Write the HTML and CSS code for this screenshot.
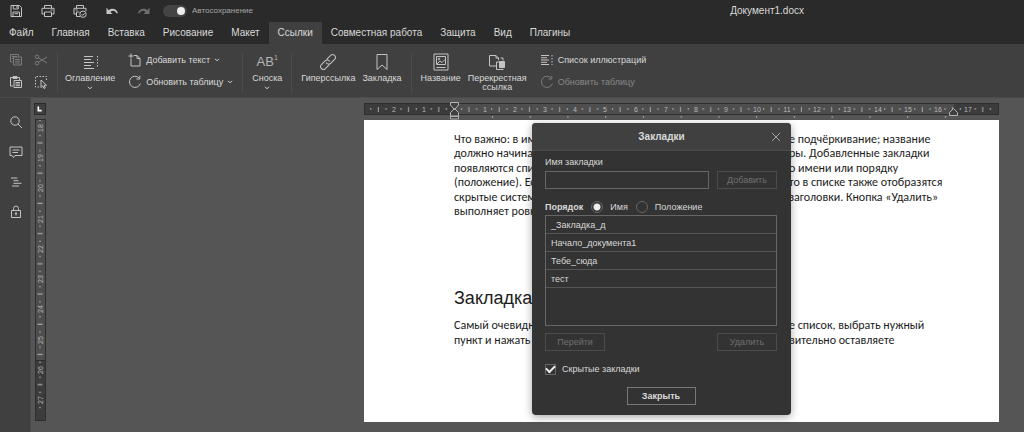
FILE: index.html
```html
<!DOCTYPE html>
<html lang="ru">
<head>
<meta charset="utf-8">
<title>Документ1.docx</title>
<link rel="stylesheet" href="styles.css">
</head>
<body>
<svg class="defs" width="0" height="0" aria-hidden="true">
  <symbol id="chevron" viewBox="0 0 6 4"><path d="M1 .8l2 2 2-2"/></symbol>
  <symbol id="refresh" viewBox="0 0 14 14"><path d="M11.3 3.2A5.6 5.6 0 1 0 12.4 8.500M11.800 .8v3.200H8.400"/></symbol>
</svg>

<header class="titlebar">
  <nav class="quick" aria-label="Быстрый доступ">
    <button class="icon-btn" aria-label="Сохранить"><svg viewBox="0 0 14 14"><path d="M2 1.500h8.500l2 2v9h-10.500zM4.300 1.500v3.500h5v-3.500M4 12.500V8h6.500v4.500M5.500 9.700h3.500M8 2v2"/></svg></button>
    <button class="icon-btn" aria-label="Печать"><svg viewBox="0 0 14 14"><path d="M3.500 4V1.500h7V4M3.500 10H1V4.300h12V10h-2.500M3.500 8h7v4.500h-7zM9.500 6h2"/></svg></button>
    <button class="icon-btn" aria-label="Быстрая печать"><svg viewBox="0 0 14 14"><path d="M3.500 4V1.500h7V4M3.500 10H1V4.300h12V7M6.500 8h-3v4.500h3.500M2.500 6h2"/><circle cx="10" cy="10.200" r="3.200"/><path d="M8.500 10.200l1.200 1.200 2-2.200"/></svg></button>
    <button class="icon-btn solid" aria-label="Отменить"><svg viewBox="0 0 14 14"><path d="M1.500 3.500v6.500h6L5.400 8c2-2 4.800-1.400 6.300 1.500L13 9C11.500 4.500 7 3.500 3.700 6.200z"/></svg></button>
    <button class="icon-btn solid dim" aria-label="Повторить"><svg viewBox="0 0 14 14"><path d="M12.500 3.500v6.500h-6L8.600 8c-2-2-4.800-1.400-6.300 1.500L1 9C2.500 4.500 7 3.500 10.300 6.200z"/></svg></button>
  </nav>
  <label class="autosave"><input type="checkbox" class="switch" checked><span>Автосохранение</span></label>
  <h1 class="doc-name">Документ1.docx</h1>
</header>

<nav class="tabs" aria-label="Вкладки">
  <button class="tab">Файл</button>
  <button class="tab">Главная</button>
  <button class="tab">Вставка</button>
  <button class="tab">Рисование</button>
  <button class="tab">Макет</button>
  <button class="tab active">Ссылки</button>
  <button class="tab">Совместная работа</button>
  <button class="tab">Защита</button>
  <button class="tab">Вид</button>
  <button class="tab">Плагины</button>
</nav>

<section class="toolbar" aria-label="Ссылки">
  <div class="group clipboard">
    <button class="icon-btn dim" aria-label="Копировать"><svg viewBox="0 0 14 14"><path d="M3.500 9H1.500V1.500h8v2M4.500 4h8v8h-8zM6 6.500h5M6 8.200h5M6 10h5M3 3.500h5M3 5.500h1"/></svg></button>
    <button class="icon-btn dim" aria-label="Вырезать"><svg viewBox="0 0 14 14"><circle cx="3" cy="3.800" r="1.800"/><circle cx="3" cy="10.200" r="1.800"/><path d="M4.500 4.800L13 10M4.500 9.200L13 4"/></svg></button>
    <button class="icon-btn" aria-label="Вставить"><svg viewBox="0 0 14 14"><path d="M4 11H1.500V2.500h9V5M4 1.500h4v2H4zM5 5.500h7.500v7H5zM6.500 7.500h4.500M6.500 9h4.500M6.500 10.700h4.500"/></svg></button>
    <button class="icon-btn" aria-label="Выделить"><svg viewBox="0 0 14 14"><path stroke-dasharray="1.500 1.500" d="M5 12H1.500V1.500h11V6"/><path fill="#404040" d="M7 5l5.500 5.200-2.500.2 1.300 2.500-1.300.6-1.200-2.600L7 12.600z"/></svg></button>
  </div>
  <div class="group contents">
    <button class="big"><svg class="big-icon" viewBox="0 0 18 18"><path d="M3 3.500h9M3 6.500h7M3 9.500h10M3 12.500h7M3 15.500h10"/><path stroke-dasharray="1.500 1.500" d="M16.500 3v12"/></svg><span>Оглавление</span><svg class="chev"><use href="#chevron"/></svg></button>
    <div class="stack">
      <button class="row-btn"><svg class="row-icon" viewBox="0 0 14 14"><path d="M6 2.500h3l3 3v7.500H3V6M9 2.500v3h3M3 .5v5M.5 3h5"/></svg><span>Добавить текст</span><svg class="chev"><use href="#chevron"/></svg></button>
      <button class="row-btn"><svg class="row-icon"><use href="#refresh"/></svg><span>Обновить таблицу</span><svg class="chev"><use href="#chevron"/></svg></button>
    </div>
  </div>
  <div class="group">
    <button class="big"><span class="ab">AB<sup>1</sup></span><span>Сноска</span><svg class="chev"><use href="#chevron"/></svg></button>
  </div>
  <div class="group links">
    <button class="big"><svg class="big-icon" viewBox="0 0 18 18"><g transform="rotate(-45 9 9)"><path d="M8 11.800H2.500a2.800 2.800 0 0 1 0-5.600H8a2.800 2.800 0 0 1 2.600 3.800M10 6.200h5.500a2.800 2.800 0 0 1 0 5.600H10a2.800 2.800 0 0 1-2.600-3.800"/></g></svg><span>Гиперссылка</span></button>
    <button class="big"><svg class="big-icon" viewBox="0 0 18 18"><path d="M4 1.500h10v15l-5-4.500-5 4.500z"/></svg><span>Закладка</span></button>
  </div>
  <div class="group captions">
    <button class="big"><svg class="big-icon" viewBox="0 0 18 18"><path d="M2 1h14v16H2zM4.500 3.500h9v8h-9zM5 11l3-3 2 1.500 3-3M4.500 14.500h9"/><circle cx="7" cy="6" r=".8"/></svg><span>Название</span></button>
    <button class="big"><svg class="big-icon" viewBox="0 0 18 18"><path d="M8 13H1.500V2.500H8l2.500 2.500V7M8 2.500V5h2.500M12.500 5H15v2.500M15.500 16.500H8.500V9H11"/><path fill="currentColor" d="M11.500 8.500h5v6h-5z"/></svg><span>Перекрестная<br>ссылка</span></button>
    <div class="stack">
      <button class="row-btn"><svg class="row-icon" viewBox="0 0 14 14"><path d="M1 2.500h8M1 4.800h6M1 7h8M1 9.300h6M1 11.500h8"/><path stroke-dasharray="1.500 1.500" d="M12 2v10"/></svg><span>Список иллюстраций</span></button>
      <button class="row-btn dim" disabled><svg class="row-icon"><use href="#refresh"/></svg><span>Обновить таблицу</span></button>
    </div>
  </div>
</section>

<main class="workspace">
  <aside class="sidebar">
    <button class="icon-btn" aria-label="Поиск"><svg viewBox="0 0 14 14"><circle cx="6" cy="6" r="4.200"/><path d="M9 9l4 4"/></svg></button>
    <button class="icon-btn" aria-label="Комментарии"><svg viewBox="0 0 14 14"><path d="M1 2h12v8.500H6l-1.500 2-1.500-2H1zM3.500 5h7M3.500 7.500h5.500"/></svg></button>
    <button class="icon-btn" aria-label="Заголовки"><svg viewBox="0 0 14 14"><path d="M2 3h6.500M4.500 5.700h5M4.500 8.300h8M3 11h7"/></svg></button>
    <button class="icon-btn" aria-label="Защита"><svg viewBox="0 0 14 14"><path d="M2.500 5.500h9v7h-9zM4.500 5.500v-2a2.500 2.500 0 0 1 5 0v2M7 8v2.500"/><circle cx="7" cy="8.300" r=".7"/></svg></button>
  </aside>

  <div class="vertical">
    <button class="tab-stop" aria-label="Позиция табуляции"><svg viewBox="0 0 12 12"><path d="M4 3v5h4"/></svg></button>
    <svg class="v-ruler" viewBox="0 0 12 302" aria-hidden="true">
      <defs><pattern id="v-ticks" width="12" height="30.220" y="9" patternUnits="userSpaceOnUse"><path d="M5 7.500h2M3.500 15h5M5 22.700h2"/></pattern></defs>
      <rect class="ruler-main" x="1" y="0" width="10" height="302"/>
      <rect class="ruler-margin" x="1" y="241" width="10" height="61"/>
      <rect class="ticks" fill="url(#v-ticks)" width="12" height="290"/>
      <rect class="ruler-frame" x="1.500" y=".5" width="10" height="301"/>
      <path class="ruler-frame" d="M1 241.500h11"/>
      <g class="digits" transform="rotate(-90)">
        <text x="-9" y="9">18</text><text x="-39" y="9">19</text><text x="-69" y="9">20</text><text x="-100" y="9">21</text><text x="-130" y="9">22</text><text x="-160" y="9">23</text><text x="-190" y="9">24</text><text x="-221" y="9">25</text><text x="-251" y="9">26</text><text x="-281" y="9">27</text>
      </g>
    </svg>
  </div>

  <div class="document">
    <svg class="h-ruler" viewBox="0 0 635 22" aria-hidden="true">
      <defs>
        <pattern id="h-ticks" width="30.220" height="12" x="90" y="6" patternUnits="userSpaceOnUse"><path d="M7.500 4v2M15 3v5M22.700 4v2"/></pattern>
        <pattern id="tabs-marks" width="37.750" height="3" x="109" y="18" patternUnits="userSpaceOnUse"><path d="M19.500 0v2"/></pattern>
      </defs>
      <rect class="ruler-main" y="6" width="635" height="11"/>
      <rect class="ruler-margin" y="6" width="90" height="11"/>
      <rect class="ruler-margin" x="590" y="6" width="45" height="11"/>
      <rect class="ticks" fill="url(#h-ticks)" x="4" y="6" width="625" height="11"/>
      <rect class="ticks" fill="url(#tabs-marks)" x="100" y="18" width="500" height="3"/>
      <rect class="ruler-frame" x=".5" y="5.500" width="634" height="11"/>
      <g class="digits">
        <text x="30" y="14">2</text><text x="60" y="14">1</text><text x="121" y="14">1</text><text x="151" y="14">2</text><text x="181" y="14">3</text><text x="211" y="14">4</text><text x="241" y="14">5</text><text x="272" y="14">6</text><text x="302" y="14">7</text><text x="332" y="14">8</text><text x="362" y="14">9</text><text x="393" y="14">10</text><text x="423" y="14">11</text><text x="453" y="14">12</text><text x="483" y="14">13</text><text x="514" y="14">14</text><text x="544" y="14">15</text><text x="574" y="14">16</text><text x="604" y="14">17</text>
      </g>
      <path class="marker" d="M86.500 4.500h8v2.500l-3.500 4h-1l-3.500-4zM86.500 18v-3.500l3.500-3.500h1l3.500 3.500V18zM86.500 18.500h8v2.500h-8zM585.500 17.500v-3l4-4 4 4v3z"/>
    </svg>
    <article class="page">
      <div class="para">
        <p>Что важно: в им<br>должно начина<br>появляются спи<br>(положение). Ес<br>скрытые систем<br>выполняет ровн</p>
        <p>е подчёркивание; название<br>ры. Добавленные закладки<br>о имени или порядку<br>то в списке также отобразятся<br>заголовки. Кнопка «Удалить»</p>
      </div>
      <h2>Закладка</h2>
      <div class="para">
        <p>Самый очевидн<br>пункт и нажать</p>
        <p>е список, выбрать нужный<br>вительно оставляете</p>
      </div>
    </article>
  </div>

  <form class="dialog" role="dialog" aria-labelledby="dialog-title">
    <div class="dialog-head">
      <h2 id="dialog-title">Закладки</h2>
      <button type="button" class="close" aria-label="Закрыть окно"><svg viewBox="0 0 10 10"><path d="M1 1l8 8M9 1L1 9"/></svg></button>
    </div>
    <div class="dialog-body">
      <label for="bm-name">Имя закладки</label>
      <div class="name-row">
        <input id="bm-name" type="text">
        <button type="button" class="btn" disabled>Добавить</button>
      </div>
      <div class="order" role="radiogroup" aria-labelledby="order-label">
        <strong id="order-label">Порядок</strong>
        <label><input type="radio" name="order" checked>Имя</label>
        <label><input type="radio" name="order">Положение</label>
      </div>
      <ul class="list">
        <li>_Закладка_д</li>
        <li>Начало_документа1</li>
        <li>Тебе_сюда</li>
        <li>тест</li>
      </ul>
      <div class="actions">
        <button type="button" class="btn" disabled>Перейти</button>
        <button type="button" class="btn" disabled>Удалить</button>
      </div>
      <label class="hidden-marks"><input type="checkbox" checked>Скрытые закладки</label>
      <button type="button" class="btn primary">Закрыть</button>
    </div>
  </form>
</main>
</body>
</html>
```
FILE: styles.css
```css
* { box-sizing: border-box; }
body {
  margin: 0;
  min-height: 100vh;
  display: flex;
  flex-direction: column;
  overflow: hidden;
  background: #555;
  color: #d9d9d9;
  font: 9px/12px "Liberation Sans", Arial, sans-serif;
}
button, input { font: inherit; color: inherit; margin: 0; }
button { padding: 0; border: 0; background: none; }
h1, h2, p, ul { margin: 0; padding: 0; font-weight: normal; }
svg { fill: none; stroke: currentColor; stroke-width: 1; display: block; }
.defs { position: absolute; }
.dim { opacity: .45; }
.icon-btn, .icon-btn svg { width: 14px; height: 14px; flex: none; }
.icon-btn, .big-icon, .row-icon { color: #c4c4c4; }
.icon-btn.solid svg { fill: currentColor; stroke: none; }

.titlebar { display: flex; align-items: center; height: 22px; padding-left: 9px; background: #2a2a2a; }
.quick { display: flex; gap: 18px; }
.autosave { display: flex; align-items: center; gap: 5px; margin-left: 12px; flex: 1; color: #a6a6a6; font-size: 8px; }
.switch { appearance: none; width: 24px; height: 12px; border-radius: 6px; background: #444; padding: 2px; display: flex; justify-content: flex-end; }
.switch::before { content: ""; width: 8px; height: 8px; border-radius: 50%; background: #eee; }
.doc-name { font-size: 10px; margin-right: 220px; }

.tabs { display: flex; height: 22px; background: #2a2a2a; font-size: 10px; }
.tab { padding: 0 9px; }
.tab.active { background: #404040; }

.toolbar { display: flex; height: 53px; padding: 9px 0 5px; background: #404040; }
.group { display: flex; padding: 0 9px; border-right: 1px solid #4c4c4c; }
.group:last-child { border: 0; }
.clipboard { display: grid; grid-template-columns: 14px 14px; column-gap: 11px; row-gap: 8px; align-content: start; }
.contents { gap: 13px; padding-left: 7px; }
.links, .captions { gap: 7px; }
.big { display: flex; flex-direction: column; align-items: center; line-height: 9px; }
.big-icon { width: 18px; height: 18px; margin-bottom: 3px; }
.ab { font-size: 13px; height: 18px; line-height: 18px; margin-bottom: 3px; display: flex; color: #b5b5b5; }
.ab sup { font-size: 7px; line-height: 9px; }
.chev { width: 6px; height: 4px; }
.big .chev { margin-top: 3px; }
.stack { display: flex; flex-direction: column; gap: 8px; }
.captions .stack { margin-left: 6px; }
.row-btn { display: flex; align-items: center; gap: 4px; height: 14px; }
.row-icon { width: 14px; height: 14px; }

.workspace { position: relative; display: flex; flex: 1; border-top: 1px solid #4c4c4c; }
.sidebar { display: flex; flex-direction: column; gap: 16px; width: 31px; padding: 17px 9px; background: #404040; border-right: 1px solid #4a4a4a; }
.vertical { width: 15px; padding-top: 5px; display: flex; flex-direction: column; align-items: flex-end; gap: 4px; }
.tab-stop { width: 12px; height: 12px; border: 1px solid #2b2b2b; background: #404040; color: #fff; }
.tab-stop svg { width: 10px; height: 10px; stroke-width: 2; }
.v-ruler { width: 12px; height: 302px; color: #a8a8a8; }
.h-ruler { width: 635px; height: 22px; color: #a8a8a8; }
.ticks { stroke: none; }
.ruler-main { fill: #4e4e4e; stroke: none; }
.ruler-margin { fill: #3c3c3c; stroke: none; }
.ruler-frame { stroke: #2e2e2e; }
.digits { fill: #b8b8b8; stroke: none; font-size: 7px; text-anchor: middle; }
.marker { fill: #404040; stroke: #b5b5b5; }

.document { flex: 1; display: flex; flex-direction: column; padding: 0 25px 10px 318px; }
.page {
  flex: 1;
  padding: 12px 0 0 90px;
  background: #fff;
  color: #1c1c1c;
  font: 12px/1.2 Carlito, Lato, "Noto Sans", sans-serif;
}
.page h2 { margin: 69px 0 9px; font: 18px/22px "Liberation Sans", Arial, sans-serif; }
.para { display: grid; grid-template-columns: 335px 1fr; white-space: nowrap; }

.dialog {
  position: absolute;
  left: 532px;
  top: 25px;
  width: 259px;
  border-radius: 4px;
  background: #333;
  box-shadow: 0 2px 8px rgba(0, 0, 0, .35);
  overflow: hidden;
}
.dialog-head { display: flex; align-items: center; height: 28px; padding: 0 10px; background: #404040; border-bottom: 1px solid #4c4c4c; }
.dialog-head h2 { flex: 1; padding-left: 10px; text-align: center; font-size: 10px; font-weight: bold; }
.close svg { width: 10px; height: 10px; color: #a8a8a8; }
.dialog-body { display: flex; flex-direction: column; padding: 5px 14px 10px 13px; }
.name-row { display: flex; gap: 8px; margin-top: 3px; }
.name-row input { flex: 1; min-width: 0; height: 18px; border: 1px solid #666; background: none; }
.btn { width: 60px; height: 18px; border: 1px solid #4c4c4c; }
.btn:disabled { color: #707070; }
.order { display: flex; gap: 8px; align-items: center; height: 12px; margin: 12px 0 2px; }
.order label { display: flex; align-items: center; gap: 7px; }
.order input { appearance: none; width: 12px; height: 12px; border: 1px solid #666; border-radius: 50%; }
.order input:checked { background: radial-gradient(circle, #eee 3px, transparent 4px); }
.list { height: 111px; border: 1px solid #666; list-style: none; }
.list li { height: 18px; line-height: 18px; padding-left: 5px; border-bottom: 1px solid #555; }
.actions { display: flex; justify-content: space-between; margin-top: 7px; }
.hidden-marks { display: flex; align-items: center; gap: 6px; margin: 12px 0; }
.hidden-marks input { appearance: none; width: 11px; height: 11px; border: 1px solid #666; display: grid; place-items: center; }
.hidden-marks input:checked::before { content: ""; width: 7px; height: 4px; margin-bottom: 2px; border: solid #eee; border-width: 0 0 2px 2px; rotate: -45deg; }
.primary { width: 69px; align-self: center; border-color: #777; font-weight: bold; }
```
